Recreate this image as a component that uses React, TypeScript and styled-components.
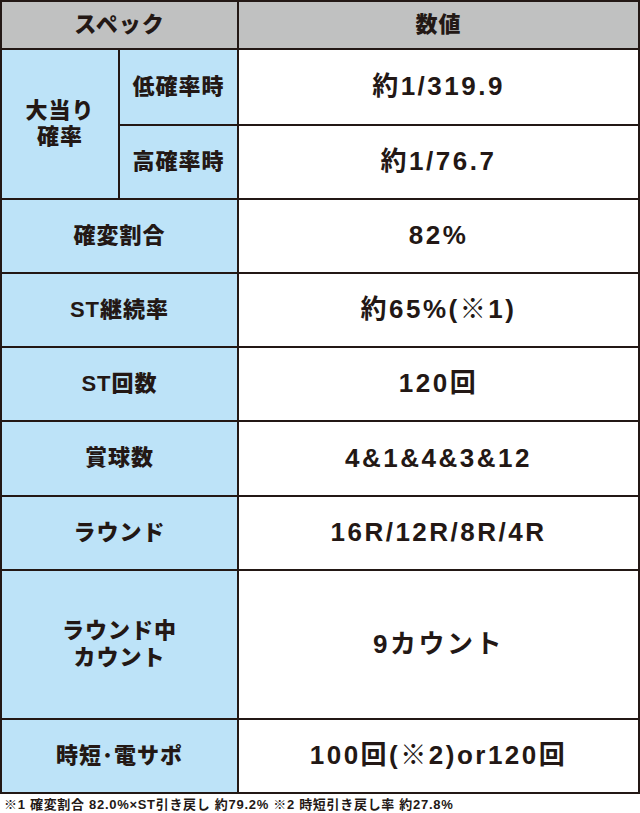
import React from "react";
import styled, { createGlobalStyle } from "styled-components";

const Global = createGlobalStyle`
  html, body { margin: 0; padding: 0; background: #ffffff; }
  body { font-family: "Liberation Sans", "Noto Sans CJK JP", sans-serif; color: #231815; }
`;

const Page = styled.div`
  width: 640px;
  background: #ffffff;
`;

const Table = styled.div`
  display: grid;
  grid-template-columns: 116px 117px 399px;
  grid-template-rows: 46px 74px 72px 72px 72px 72px 73px 72px 147px 72px;
  gap: 2px;
  padding: 2px;
  background: #231815;
  width: 640px;
  box-sizing: border-box;
`;

const Cell = styled.div<{ $col: string; $row: string; $tone: "head" | "label" | "value" }>`
  grid-column: ${(p) => p.$col};
  grid-row: ${(p) => p.$row};
  display: flex;
  align-items: center;
  justify-content: center;
  text-align: center;
  font-weight: ${(p) => (p.$tone === "value" ? 700 : 900)};
  background: ${(p) =>
    p.$tone === "head" ? "#c0c1c1" : p.$tone === "label" ? "#bde3f8" : "#ffffff"};
  font-size: ${(p) => (p.$tone === "value" ? "26px" : "22px")};
  letter-spacing: ${(p) => (p.$tone === "value" ? "2.5px" : "1px")};
  line-height: 1.2;
`;

const Footer = styled.div`
  height: 19px;
  display: flex;
  align-items: center;
  padding-left: 4px;
  font-size: 13px;
  font-weight: 700;
  letter-spacing: 0.7px;
  white-space: nowrap;
`;

type Row = { label: React.ReactNode; value: string };

const rows: Row[] = [
  { label: "確変割合", value: "82%" },
  { label: "ST継続率", value: "約65%(※1)" },
  { label: "ST回数", value: "120回" },
  { label: "賞球数", value: "4&1&4&3&12" },
  { label: "ラウンド", value: "16R/12R/8R/4R" },
  { label: <>ラウンド中<br />カウント</>, value: "9カウント" },
  { label: "時短･電サポ", value: "100回(※2)or120回" },
];

export default function App() {
  return (
    <Page>
      <Global />
      <Table>
        <Cell $col="1 / 3" $row="1" $tone="head">スペック</Cell>
        <Cell $col="3" $row="1" $tone="head">数値</Cell>
        <Cell $col="1" $row="2 / 4" $tone="label">大当り<br />確率</Cell>
        <Cell $col="2" $row="2" $tone="label">低確率時</Cell>
        <Cell $col="3" $row="2" $tone="value">約1/319.9</Cell>
        <Cell $col="2" $row="3" $tone="label">高確率時</Cell>
        <Cell $col="3" $row="3" $tone="value">約1/76.7</Cell>
        {rows.map((r, i) => (
          <React.Fragment key={i}>
            <Cell $col="1 / 3" $row={String(i + 4)} $tone="label">{r.label}</Cell>
            <Cell $col="3" $row={String(i + 4)} $tone="value">{r.value}</Cell>
          </React.Fragment>
        ))}
      </Table>
      <Footer>※1 確変割合 82.0%×ST引き戻し 約79.2% ※2 時短引き戻し率 約27.8%</Footer>
    </Page>
  );
}
